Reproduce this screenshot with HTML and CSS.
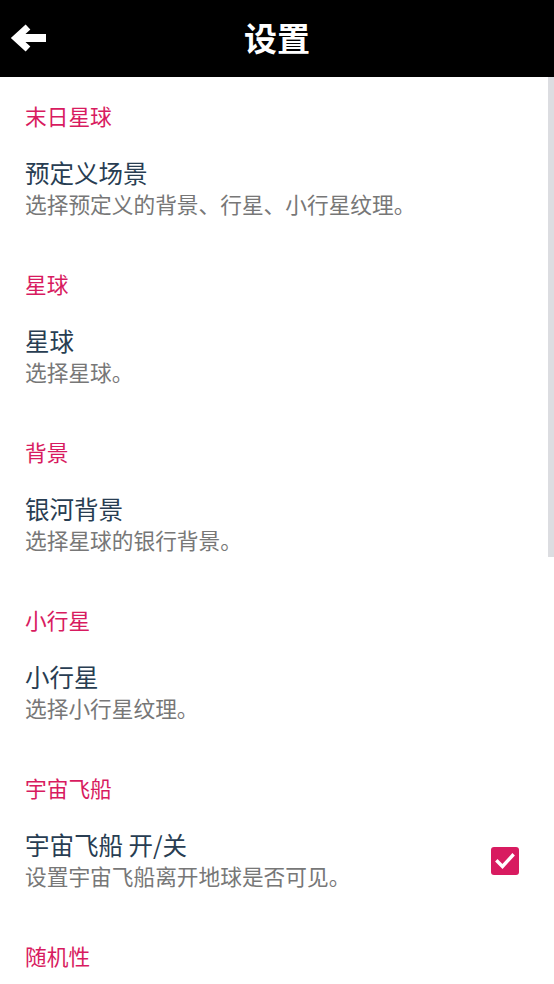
FILE: index.html
```html
<!DOCTYPE html>
<html lang="zh-CN">
<head>
<meta charset="utf-8">
<title>设置</title>
<link rel="stylesheet" href="styles.css">
</head>
<body>
<div class="app">
  <header class="topbar">
    <div class="back">
      <svg width="36" height="30" viewBox="0 0 36 30">
        <line x1="9" y1="15" x2="36" y2="15" stroke="#fff" stroke-width="8"/>
        <polyline points="18,4 6,15 18,26" fill="none" stroke="#fff" stroke-width="7" stroke-linejoin="miter"/>
      </svg>
    </div>
    <h1 class="title">设置</h1>
    <div></div>
  </header>
  <main class="list">
    <section class="group">
      <div class="cat">末日星球</div>
      <div class="item">
        <div class="texts">
          <div class="ititle">预定义场景</div>
          <div class="isum">选择预定义的背景、行星、小行星纹理。</div>
        </div>
      </div>
    </section>
    <section class="group">
      <div class="cat">星球</div>
      <div class="item">
        <div class="texts">
          <div class="ititle">星球</div>
          <div class="isum">选择星球。</div>
        </div>
      </div>
    </section>
    <section class="group">
      <div class="cat">背景</div>
      <div class="item">
        <div class="texts">
          <div class="ititle">银河背景</div>
          <div class="isum">选择星球的银行背景。</div>
        </div>
      </div>
    </section>
    <section class="group">
      <div class="cat">小行星</div>
      <div class="item">
        <div class="texts">
          <div class="ititle">小行星</div>
          <div class="isum">选择小行星纹理。</div>
        </div>
      </div>
    </section>
    <section class="group">
      <div class="cat">宇宙飞船</div>
      <div class="item">
        <div class="texts">
          <div class="ititle">宇宙飞船 开/关</div>
          <div class="isum">设置宇宙飞船离开地球是否可见。</div>
        </div>
        <div class="check">
          <svg width="28" height="28" viewBox="0 0 28 28">
            <path d="M6.5 14.5 L11.5 19.5 L21.5 8.5" fill="none" stroke="#fff" stroke-width="3.4" stroke-linecap="square"/>
          </svg>
        </div>
      </div>
    </section>
    <section class="group">
      <div class="cat">随机性</div>
    </section>
  </main>
  <div class="scrollthumb"></div>
</div>
</body>
</html>
```

FILE: styles.css
```css
html, body {
  margin: 0;
  padding: 0;
  background: #ffffff;
}
body {
  font-family: "Noto Sans CJK SC", "Noto Sans", sans-serif;
}
.app {
  position: relative;
  width: 554px;
  height: 984px;
  overflow: hidden;
  background: #ffffff;
}
.topbar {
  height: 77px;
  background: #000000;
  display: grid;
  grid-template-columns: 1fr auto 1fr;
  align-items: center;
}
.back {
  padding-left: 10px;
  height: 30px;
  display: flex;
  align-items: center;
  margin-top: -1px;
}
.back svg {
  display: block;
}
.title {
  margin: 0;
  color: #ffffff;
  font-size: 33px;
  font-weight: 700;
  line-height: 40px;
  margin-top: -3px;
}
.list {
  padding-top: 21.5px;
}
.cat {
  padding-left: 25px;
  font-size: 21.7px;
  line-height: 34px;
  color: #d81b60;
}
.item {
  display: flex;
  align-items: center;
  padding: 24.5px 35px 47.5px 25px;
}
.texts {
  flex: 1;
}
.ititle {
  font-size: 24.5px;
  line-height: 32px;
  color: #283d52;
}
.isum {
  font-size: 21.7px;
  line-height: 30px;
  color: #777777;
}
.check {
  width: 28px;
  height: 28px;
  border-radius: 3px;
  background: #d81b60;
  margin-top: 1px;
}
.check svg {
  display: block;
}
.scrollthumb {
  position: absolute;
  right: 0;
  top: 77px;
  width: 6px;
  height: 480px;
  background: #dcdde1;
}
```
